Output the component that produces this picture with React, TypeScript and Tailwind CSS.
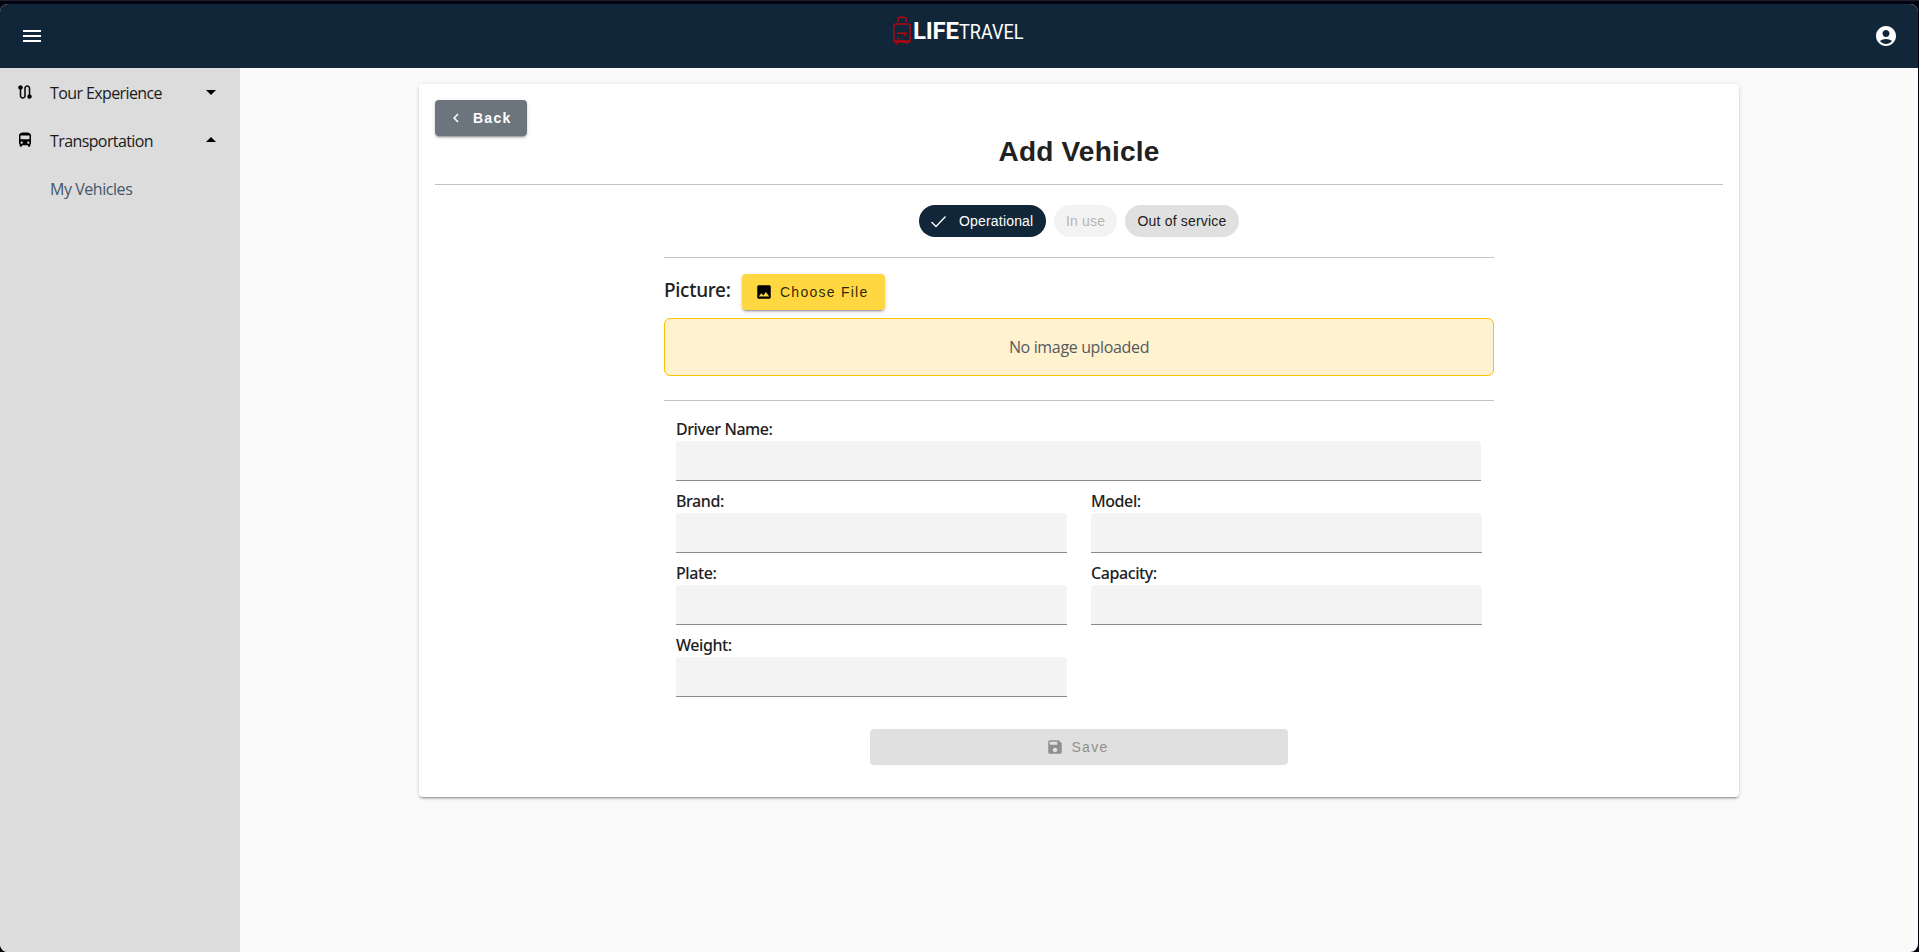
import type { ReactNode } from "react";
import { MdAccountCircle, MdArrowDropDown, MdArrowDropUp, MdChevronLeft, MdDirectionsBus, MdImage, MdMenu, MdRoute, MdSave } from "react-icons/md";

const elevation = "shadow-[0_3px_1px_-2px_rgba(0,0,0,0.2),0_2px_2px_0_rgba(0,0,0,0.14),0_1px_5px_0_rgba(0,0,0,0.12)]";

function Logo() {
  return (
    <div className="flex h-[52px] items-center">
      <svg className="mt-[1px] h-[29px] w-[18px]" viewBox="0 0 18 29" fill="none" stroke="#b5060c" strokeWidth="1.4">
        <path d="M5 6V3.2Q5 1.2 7 1.2H11Q13 1.2 13 3.2V6" />
        <rect x="0.9" y="8" width="16.2" height="18" rx="1.8" />
        <path d="M1 25H17M4 17.3H14M11.5 17.5V20M4 22.5H6.5M3.5 26.5V28.5M14.5 26.5V28.5" />
      </svg>
      <span className="mt-[2px] ml-[2px] inline-block w-[46px] whitespace-nowrap text-[24px] leading-none font-bold tracking-[-0.2px] text-white">LIFE</span>
      <span className="mt-[4px] inline-block w-[66px] origin-left scale-x-[0.86] text-[21px] leading-none font-normal text-white">TRAVEL</span>
    </div>
  );
}

function NavItem({ icon, label, arrow }: { icon: ReactNode; label: string; arrow: ReactNode }) {
  return (
    <button className="flex h-12 w-full items-center pr-[17px] pl-[16px] text-black">
      <span className="flex w-[34px] text-[18px]">{icon}</span>
      <span className="flex-1 pt-px text-left text-[16px] font-normal tracking-[-0.6px] text-[#1a1a1a]">{label}</span>
      <span className="text-[24px]">{arrow}</span>
    </button>
  );
}

function Field({ label, wide }: { label: string; wide?: boolean }) {
  return (
    <label className={wide ? "col-span-2 mr-px block" : "block"}>
      <span className="block h-6 text-[16px] leading-[24px] font-medium tracking-[-0.42px]">{label}</span>
      <input className="block h-10 w-full rounded-t-[4px] border-b border-[#8c8c8c] bg-[#f4f4f4] px-4 outline-none" />
    </label>
  );
}

export default function App() {
  return (
    <div className="h-[952px] w-[1919px] overflow-hidden border-t border-[#1c1e2b] bg-[#02030f] pt-[3px] pr-px font-['Noto_Sans','Open_Sans',sans-serif] text-[#212121]">
      <div className="flex h-full flex-col overflow-hidden rounded-[8px] bg-[#fafafa]">
        <header className="flex h-16 shrink-0 items-start justify-between bg-[#122639] pr-[20px] pl-[20px] text-white">
          <button className="flex h-16 items-center text-[24px]"><MdMenu /></button>
          <div className="font-['Roboto',sans-serif]"><Logo /></div>
          <button className="flex h-16 items-center text-[24px]"><MdAccountCircle /></button>
        </header>
        <div className="flex min-h-0 flex-1">
          <nav className="w-60 shrink-0 bg-[#dcdcdc] font-['Open_Sans',sans-serif]">
            <NavItem icon={<MdRoute />} label="Tour Experience" arrow={<MdArrowDropDown />} />
            <NavItem icon={<MdDirectionsBus />} label="Transportation" arrow={<MdArrowDropUp />} />
            <a className="flex h-12 items-center pt-px pl-[50px] text-[16px] font-normal tracking-[-0.45px] text-[#44566a]">My Vehicles</a>
          </nav>
          <main className="flex flex-1 items-start justify-center pt-4">
            <section className={`h-[713px] w-[1320px] rounded-[4px] bg-white p-4 ${elevation}`}>
              <button className={`flex h-9 w-[92px] items-center rounded-[4px] bg-[#6c757d] pl-[12px] font-['Liberation_Sans',sans-serif] text-[14px] font-bold tracking-[1.25px] text-white ${elevation}`}>
                <MdChevronLeft className="mr-[8px] text-[18px]" />Back
              </button>
              <h1 className="flex h-8 items-center justify-center font-['Liberation_Sans',sans-serif] text-[28px] font-bold tracking-[0.2px]">Add Vehicle</h1>
              <hr className="mt-4 border-[#c2c2c2]" />
              <div className="mt-5 flex h-8 justify-center gap-2 font-['Liberation_Sans',sans-serif] text-[14px] tracking-[0.18px]">
                <span className="flex w-[127px] items-center rounded-full bg-[#122639] pl-3 text-white">
                  <svg className="mr-[13px] h-[13px] w-[15px]" viewBox="0 0 15 13" fill="none" stroke="currentColor" strokeWidth="1.3"><path d="M0.5 7L5 11.5L14.5 1.5" /></svg>
                  Operational
                </span>
                <span className="flex w-[63px] items-center justify-center rounded-full bg-[#f3f3f3] text-[#b5b5b5]">In use</span>
                <span className="flex w-[114px] items-center justify-center rounded-full bg-[#e0e0e0]">Out of service</span>
              </div>
              <div className="mx-auto w-[830px]">
                <hr className="mt-5 border-[#c2c2c2]" />
                <div className="mt-4 flex h-9">
                  <span className="w-[78px] text-[19px] leading-[33px] font-medium tracking-[-0.3px]">Picture:</span>
                  <button className={`flex h-9 w-[143px] items-center rounded-[4px] bg-[#ffd740] pl-[13px] font-['Liberation_Sans',sans-serif] text-[14px] tracking-[1.25px] text-black/85 ${elevation}`}>
                    <MdImage className="mr-[7px] text-[18px] text-black" />Choose File
                  </button>
                </div>
                <div className="mt-2 flex h-[58px] items-center justify-center rounded-[6px] border border-[#ffc107] bg-[#fff2ce] font-['Open_Sans',sans-serif] text-[16px] tracking-[-0.35px] text-[#555961]">No image uploaded</div>
                <hr className="mt-6 border-[#c2c2c2]" />
                <form className="mt-4 grid grid-cols-2 gap-x-6 gap-y-2 px-3">
                  <Field label="Driver Name:" wide />
                  <Field label="Brand:" />
                  <Field label="Model:" />
                  <Field label="Plate:" />
                  <Field label="Capacity:" />
                  <Field label="Weight:" />
                </form>
                <button disabled className="mx-auto mt-8 flex h-9 w-[418px] items-center justify-center rounded-[4px] bg-[#e0e0e0] pr-[4px] font-['Liberation_Sans',sans-serif] text-[14px] tracking-[1.25px] text-[#8f8f8f]">
                  <MdSave className="mr-[8px] text-[18px]" />Save
                </button>
              </div>
            </section>
          </main>
        </div>
      </div>
    </div>
  );
}
